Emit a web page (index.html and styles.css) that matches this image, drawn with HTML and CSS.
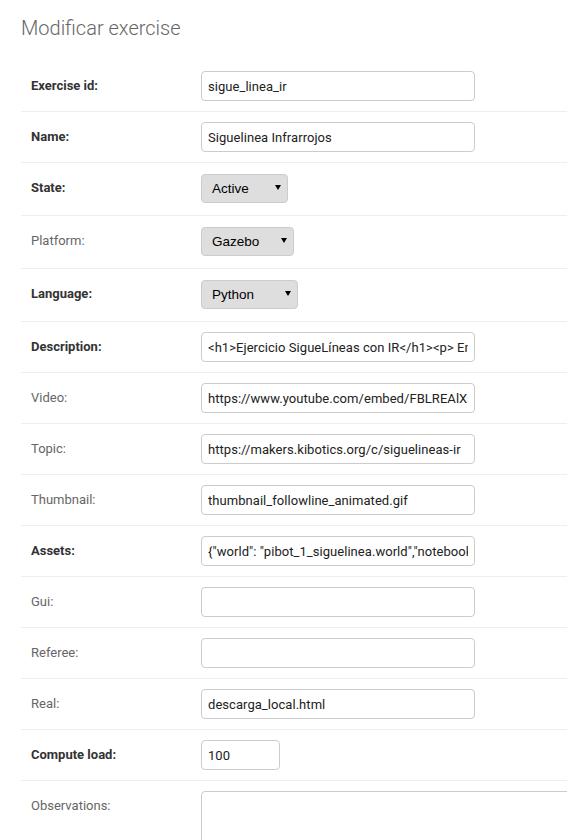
FILE: index.html
```html
<!DOCTYPE html>
<html lang="es">
<head>
<meta charset="utf-8">
<title>Modificar exercise</title>
<link rel="stylesheet" href="styles.css">
</head>
<body>
<div class="content">
  <h1 class="title">Modificar exercise</h1>
  <form class="form">
    <div class="row">
      <label class="label required" for="id_exercise_id">Exercise id:</label>
      <input class="field text" id="id_exercise_id" type="text" value="sigue_linea_ir">
    </div>
    <div class="row">
      <label class="label required" for="id_name">Name:</label>
      <input class="field text" id="id_name" type="text" value="Siguelinea Infrarrojos">
    </div>
    <div class="row">
      <label class="label required" for="id_state">State:</label>
      <span class="select-wrap w-state">
        <select class="select" id="id_state"><option>Active</option></select>
        <svg class="arrow" viewBox="0 0 6 5"><path d="M0 0H6L3 5Z"/></svg>
      </span>
    </div>
    <div class="row">
      <label class="label" for="id_platform">Platform:</label>
      <span class="select-wrap w-platform">
        <select class="select" id="id_platform"><option>Gazebo</option></select>
        <svg class="arrow" viewBox="0 0 6 5"><path d="M0 0H6L3 5Z"/></svg>
      </span>
    </div>
    <div class="row">
      <label class="label required" for="id_language">Language:</label>
      <span class="select-wrap w-language">
        <select class="select" id="id_language"><option>Python</option></select>
        <svg class="arrow" viewBox="0 0 6 5"><path d="M0 0H6L3 5Z"/></svg>
      </span>
    </div>
    <div class="row">
      <label class="label required" for="id_description">Description:</label>
      <input class="field text" id="id_description" type="text" value="&lt;h1&gt;Ejercicio SigueLíneas con IR&lt;/h1&gt;&lt;p&gt; En este ejercicio">
    </div>
    <div class="row">
      <label class="label" for="id_video">Video:</label>
      <input class="field text" id="id_video" type="text" value="https://www.youtube.com/embed/FBLREAlXsmA">
    </div>
    <div class="row">
      <label class="label" for="id_topic">Topic:</label>
      <input class="field text" id="id_topic" type="text" value="https://makers.kibotics.org/c/siguelineas-ir">
    </div>
    <div class="row">
      <label class="label" for="id_thumbnail">Thumbnail:</label>
      <input class="field text" id="id_thumbnail" type="text" value="thumbnail_followline_animated.gif">
    </div>
    <div class="row">
      <label class="label required" for="id_assets">Assets:</label>
      <input class="field text" id="id_assets" type="text" value="{&quot;world&quot;: &quot;pibot_1_siguelinea.world&quot;,&quot;notebook&quot;: &quot;siguelinea.ipynb&quot;}">
    </div>
    <div class="row">
      <label class="label" for="id_gui">Gui:</label>
      <input class="field text" id="id_gui" type="text" value="">
    </div>
    <div class="row">
      <label class="label" for="id_referee">Referee:</label>
      <input class="field text" id="id_referee" type="text" value="">
    </div>
    <div class="row">
      <label class="label" for="id_real">Real:</label>
      <input class="field text" id="id_real" type="text" value="descarga_local.html">
    </div>
    <div class="row">
      <label class="label required" for="id_compute_load">Compute load:</label>
      <input class="field number" id="id_compute_load" type="text" value="100">
    </div>
    <div class="row">
      <label class="label" for="id_observations">Observations:</label>
      <textarea class="field area" id="id_observations"></textarea>
    </div>
  </form>
</div>
</body>
</html>
```

FILE: styles.css
```css
html, body {
  margin: 0;
  padding: 0;
  overflow: hidden;
  background: #fff;
}

body {
  font-family: Roboto, "Liberation Sans", Arial, sans-serif;
  font-size: 14px;
  color: #333;
}

.content {
  padding-left: 21px;
}

.title {
  margin: 15px 0 20px;
  font-size: 20px;
  line-height: 26px;
  font-weight: 300;
  color: #666;
}

.form {
  display: block;
}

.row {
  display: flex;
  align-items: flex-start;
  padding: 10px;
  border-bottom: 1px solid #eee;
}

.label {
  flex: 0 0 160px;
  padding-right: 10px;
  font-size: 13px;
  line-height: 30px;
  color: #666;
  font-weight: 400;
  white-space: nowrap;
}

.label.required {
  color: #333;
  font-weight: 700;
}

.field {
  box-sizing: border-box;
  margin: 0;
  border: 1px solid #ccc;
  border-radius: 4px;
  padding: 5px 6px;
  font-family: Roboto, "Liberation Sans", Arial, sans-serif;
  font-size: 13px;
  letter-spacing: 0.05px;
  color: #222;
  background: #fff;
  outline: none;
}

.text {
  width: 274px;
  height: 30px;
}

.number {
  width: 79px;
  height: 30px;
}

.area {
  flex: 0 0 auto;
  width: 610px;
  height: 150px;
  resize: none;
}

.select-wrap {
  position: relative;
  display: block;
  margin: 1px 0 2px;
  height: 29px;
}

.w-state { width: 87px; }
.w-platform { width: 93px; }
.w-language { width: 97px; }

.select {
  -webkit-appearance: none;
  appearance: none;
  box-sizing: border-box;
  display: block;
  width: 100%;
  height: 29px;
  margin: 0;
  padding: 0 18px 0 10px;
  border: 1px solid #ccc;
  border-radius: 4px;
  background: #dedede;
  font-family: "Liberation Sans", Arial, sans-serif;
  font-size: 13.5px;
  color: #000;
  outline: none;
}

.arrow {
  position: absolute;
  right: 7px;
  top: 11px;
  width: 6px;
  height: 5px;
  fill: #000;
  pointer-events: none;
}
```
